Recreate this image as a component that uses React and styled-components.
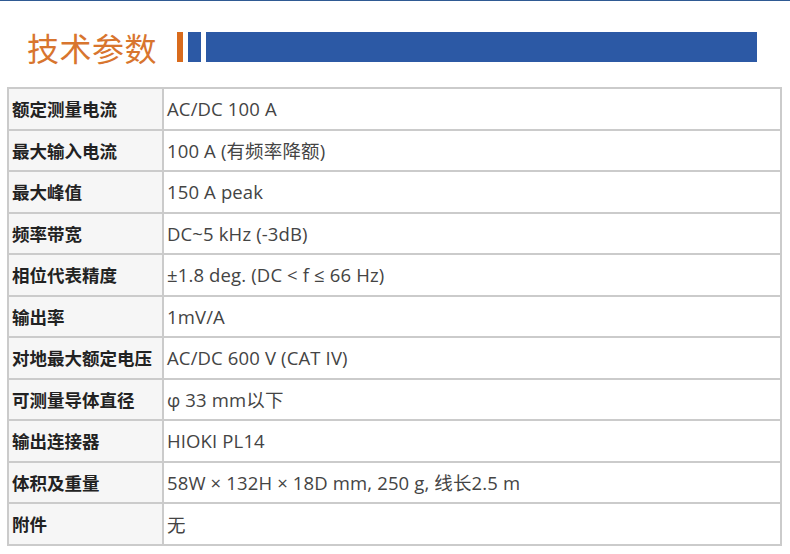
import React from 'react';
import styled, { createGlobalStyle } from 'styled-components';

const Global = createGlobalStyle`
  html, body {
    margin: 0;
    padding: 0;
    background: #fff;
  }
  body {
    font-family: "Open Sans", "Noto Sans CJK SC", sans-serif;
  }
`;

const Page = styled.div`
  width: 790px;
  height: 554px;
  box-sizing: border-box;
  border-top: 1px solid #2f5a93;
  margin-right: 3px;
  overflow: hidden;
`;

const Heading = styled.div`
  display: flex;
  align-items: center;
  height: 30px;
  margin-top: 31px;
  padding-left: 27px;
  h1 {
    margin: 0 20px 0 0;
    font-family: "Noto Sans CJK SC", sans-serif;
    font-weight: 400;
    font-size: 32px;
    line-height: 30px;
    color: #d8752e;
    letter-spacing: 0.5px;
  }
`;

const Bar = styled.span`
  display: block;
  height: 30px;
  width: ${p => p.w}px;
  margin-right: 5px;
  background: ${p => p.color};
`;

const Table = styled.div`
  display: grid;
  grid-template-columns: 153px 616px;
  grid-auto-rows: 39.5px;
  gap: 2px;
  padding: 2px;
  width: max-content;
  margin: 25px 0 0 7px;
  background: #cbcbcb;
`;

const Label = styled.div`
  display: flex;
  align-items: center;
  padding-left: 3px;
  background: #f6f6f6;
  font-family: "Noto Sans CJK SC", sans-serif;
  font-weight: 700;
  font-size: 17.5px;
  color: #222;
`;

const Value = styled.div`
  display: flex;
  align-items: center;
  padding-left: 3px;
  background: #fff;
  font-family: "Open Sans", "Noto Sans CJK SC", sans-serif;
  font-size: 18.5px;
  letter-spacing: 0.14px;
  color: #444;
  white-space: pre;
`;

const specs = [
  ['额定测量电流', 'AC/DC 100 A'],
  ['最大输入电流', '100 A (有频率降额)'],
  ['最大峰值', '150 A peak'],
  ['频率带宽', 'DC~5 kHz (-3dB)'],
  ['相位代表精度', '±1.8 deg. (DC < f ≤ 66 Hz)'],
  ['输出率', '1mV/A'],
  ['对地最大额定电压', 'AC/DC 600 V (CAT IV)'],
  ['可测量导体直径', 'φ 33 mm以下'],
  ['输出连接器', 'HIOKI PL14'],
  ['体积及重量', '58W × 132H × 18D mm, 250 g, 线长2.5 m'],
  ['附件', '无'],
];

const App = () => (
  <Page>
    <Global />
    <Heading>
      <h1>技术参数</h1>
      <Bar w={6} color="#d96b1c" />
      <Bar w={13} color="#2c59a5" />
      <Bar w={551} color="#2c59a5" />
    </Heading>
    <Table>
      {specs.map(([k, v]) => (
        <React.Fragment key={k}>
          <Label>{k}</Label>
          <Value>{v}</Value>
        </React.Fragment>
      ))}
    </Table>
  </Page>
);

export default App;
